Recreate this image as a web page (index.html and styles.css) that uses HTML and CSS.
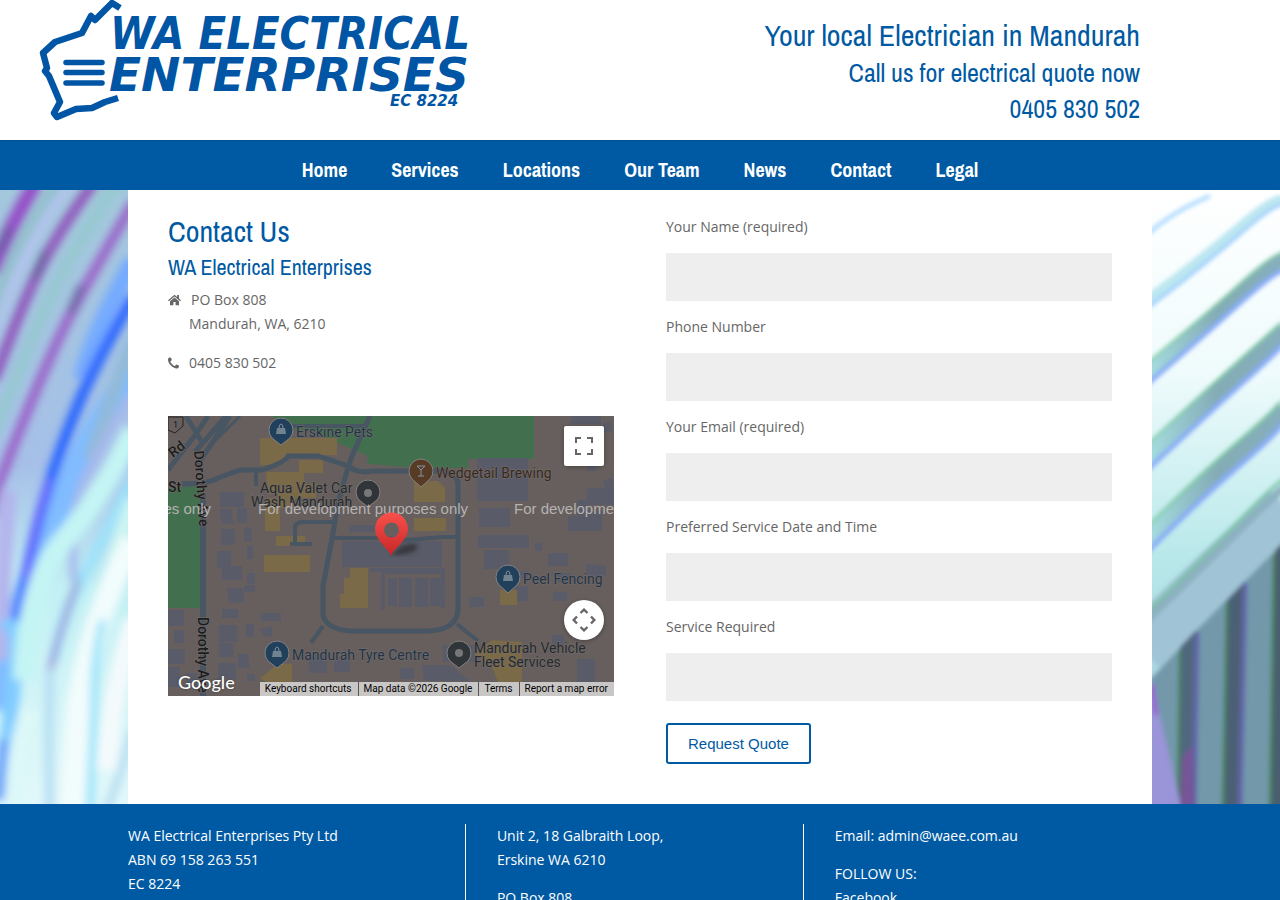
FILE: index.html
```html
<!DOCTYPE html>
<html lang="en">

<head>
    <meta charset="UTF-8">
    <meta name="viewport" content="width=device-width, initial-scale=1.0">
    <title>Contact Us - WA Electrical Enterprises</title>
    <link rel="stylesheet" href="styles.css">
</head>

<body>

    <header class="header">
        <a href="#" class="logo" aria-label="WA Electrical Enterprises">
            <svg width="432" height="120" viewBox="0 0 432 120">
                <!-- outline of Western Australia -->
                <path d="M80 8 L72 3 L55 20 L51 16 L42 33 L15 42 L3 53 L7 68 L5 71 L9 76 L20 102 L14 113 L17 117 L36 109 L52 108 L65 102 L78 98" fill="none" stroke="#0055a5" stroke-width="6.500" stroke-linejoin="round"/>
                <path d="M26 62.500H62M26 72.500H62M26 83H62" fill="none" stroke="#0055a5" stroke-width="5.500" stroke-linecap="round"/>
                <g class="logo-text">
                    <text class="narrow" x="70" y="49" font-size="45">WA ELECTRICAL</text>
                    <text x="69" y="91" font-size="47">ENTERPRISES</text>
                    <text x="350" y="106" font-size="15">EC 8224</text>
                </g>
            </svg>
        </a>
        <div class="slogan">
            <p class="slogan-big">Your local Electrician in Mandurah</p>
            <p>Call us for electrical quote now</p>
            <p>0405 830 502</p>
        </div>
    </header>

    <nav class="nav">
        <a href="#">Home</a>
        <a href="#">Services</a>
        <a href="#">Locations</a>
        <a href="#">Our Team</a>
        <a href="#">News</a>
        <a href="#">Contact</a>
        <a href="#">Legal</a>
    </nav>

    <main class="main">
        <!-- light trails behind the content -->
        <svg class="backdrop" viewBox="0 0 1280 614" preserveAspectRatio="none" aria-hidden="true">
            <defs>
                <linearGradient id="leftBase" x1="0" y1="0" x2="0" y2="1">
                    <stop offset="0" stop-color="#a3c8dc"/>
                    <stop offset=".45" stop-color="#a6c0e8"/>
                    <stop offset=".65" stop-color="#c2f0f4"/>
                    <stop offset="1" stop-color="#e2f8fa"/>
                </linearGradient>
                <linearGradient id="rightBase" x1="0" y1="0" x2="0" y2="1">
                    <stop offset="0" stop-color="#ffffff"/>
                    <stop offset=".3" stop-color="#effbfc"/>
                    <stop offset=".6" stop-color="#b8e8ea"/>
                    <stop offset="1" stop-color="#9cc4d4"/>
                </linearGradient>
                <linearGradient id="band" gradientUnits="userSpaceOnUse" x1="1152" y1="0" x2="1280" y2="0">
                    <stop offset="0" stop-color="#a4dade"/>
                    <stop offset=".5" stop-color="#84acb6"/>
                    <stop offset="1" stop-color="#86aebc"/>
                </linearGradient>
                <filter id="soft" x="-20%" y="-20%" width="140%" height="140%"><feGaussianBlur stdDeviation="4"/></filter>
                <filter id="crisp" x="-20%" y="-20%" width="140%" height="140%"><feGaussianBlur stdDeviation="2"/></filter>
            </defs>
            <rect width="640" height="614" fill="url(#leftBase)"/>
            <rect x="640" width="640" height="614" fill="url(#rightBase)"/>

            <g fill="none" filter="url(#soft)">
                <path d="M70 -10 Q20 60 -10 150" stroke="#b2c4ee" stroke-width="12"/>
                <path d="M60 -10 Q10 60 -10 130" stroke="#8fc0c8" stroke-width="9"/>
                <path d="M118 -10 Q60 80 36 140 T-10 250" stroke="#96c8d0" stroke-width="12"/>
                <path d="M36 -8 Q8 40 -8 82" stroke="#9450c8" stroke-width="15"/>
                <path d="M94 -8 Q60 40 43 72 T-6 190" stroke="#9058bc" stroke-width="11"/>
                <path d="M134 12 Q100 70 77 112 T17 247 T-6 320" stroke="#9a62c8" stroke-width="10"/>
                <g stroke="#506088" stroke-width="8" stroke-linecap="round" opacity=".6">
                    <path d="M8 40 L-2 62M44 64 L36 86M80 98 L72 120"/>
                </g>
                <path d="M134 180 Q90 240 70 290 T12 440 L-4 520" stroke="#80bcff" stroke-width="24"/>
                <path d="M134 70 Q90 150 82 190" stroke="#74aaff" stroke-width="18"/>
                <path d="M134 106 Q96 172 80 210 T50 292 T27 382 T12 444" stroke="#2864ff" stroke-width="11"/>
                <path d="M50 290 Q34 340 26 390" stroke="#6868ff" stroke-width="8"/>
                <path d="M8 300 Q2 400 0 470" stroke="#b4b4ec" stroke-width="16"/>
                <path d="M4 440 Q20 420 14 490 T-4 610" stroke="#80ccff" stroke-width="15"/>
                <path d="M134 150 Q110 210 90 270" stroke="#92bad8" stroke-width="14"/>
                <path d="M130 206 Q98 260 84 290 T74 390" stroke="#a6b8ec" stroke-width="8"/>
                <path d="M134 240 Q100 310 64 350 T24 490" stroke="#c4f5f4" stroke-width="22"/>
                <path d="M134 285 Q106 345 84 385 T54 470" stroke="#9ce2fa" stroke-width="10"/>
                <path d="M78 390 Q60 440 50 480" stroke="#9c9cd8" stroke-width="6"/>
                <path d="M50 480 Q48 560 50 620" stroke="#b6def2" stroke-width="9"/>
                <path d="M134 310 Q108 380 104 430" stroke="#ccf5f2" stroke-width="16"/>
                <path d="M134 350 Q90 430 78 520 L72 620" stroke="#f2fcfc" stroke-width="24"/>
                <path d="M30 520 Q16 560 14 620" stroke="#ddf8f8" stroke-width="20"/>
                <path d="M103 430 Q92 470 94 520 L90 620" stroke="#90e2fa" stroke-width="7"/>
                <path d="M134 430 Q112 500 106 580" stroke="#f4fafc" stroke-width="20"/>
                <path d="M132 540 Q120 590 106 620" stroke="#b4daf0" stroke-width="7"/>
                <path d="M3 550 L0 610" stroke="#6498f8" stroke-width="8"/>
            </g>

            <g fill="none" filter="url(#crisp)">
                <path d="M1148 44 Q1172 22 1210 6" stroke="#a8d8ff" stroke-width="4"/>
                <path d="M1146 112 Q1195 76 1240 38 T1286 14" stroke="#bce6f0" stroke-width="11"/>
                <path d="M1146 119 Q1195 83 1240 44 T1286 17" stroke="#9accff" stroke-width="3"/>
                <g stroke="url(#band)">
                    <path d="M1146 184 Q1200 140 1240 104 T1286 72" stroke-width="17"/>
                    <path d="M1146 268 Q1200 218 1240 182 T1286 140" stroke-width="20"/>
                    <path d="M1146 350 Q1200 296 1240 262 T1286 218" stroke-width="20"/>
                </g>
                <g stroke="#78cc98" stroke-width="3" opacity=".7">
                    <path d="M1146 174 Q1200 130 1240 94 T1286 62"/>
                    <path d="M1146 256 Q1200 206 1240 170 T1286 130"/>
                    <path d="M1146 338 Q1200 285 1240 250 T1286 207"/>
                </g>
                <g stroke="#88acf8" stroke-width="5">
                    <path d="M1146 195 Q1200 149 1240 113 T1286 80"/>
                    <path d="M1146 281 Q1200 231 1240 195 T1286 151"/>
                    <path d="M1146 363 Q1200 309 1240 275 T1286 229"/>
                </g>
                <path d="M1142 460 Q1200 402 1240 366 T1290 318" stroke="#a0c4d6" stroke-width="56"/>
                <path d="M1146 423 Q1200 371 1240 330 T1286 288" stroke="#74c09c" stroke-width="3"/>
                <path d="M1146 431 Q1200 379 1240 339 T1286 297" stroke="#8cb0c0" stroke-width="8"/>
                <path d="M1146 494 L1190 447 L1240 396 L1286 350 V620 H1146Z" fill="#7298aa"/>
                <path d="M1180 457 L1196 440 V620 H1178Z" fill="#50687e"/>
                <path d="M1227 410 L1245 391 L1242 620 H1224Z" fill="#4c6074"/>
                <path d="M1275 360 L1286 350 V620 H1271Z" fill="#485e70"/>
                <path d="M1180 460 L1178 620M1227 412 L1223 620M1274 364 L1270 620" stroke="#48845c" stroke-width="3"/>
                <path d="M1197 442 L1194 620M1245 393 L1240 620" stroke="#6266a8" stroke-width="5"/>
                <path d="M1148 480 L1154 500 L1182 620 H1146Z" fill="#9a94d8"/>
                <path d="M1152 495 L1156 525" stroke="#9868d0" stroke-width="5"/>
                <path d="M1182 568 L1192 555 L1194 620 H1180Z" fill="#765496"/>
            </g>
        </svg>

        <div class="container">
            <section class="contact">
                <h1>Contact Us</h1>
                <h2>WA Electrical Enterprises</h2>
                <div class="address">
                    <svg width="13" height="12" viewBox="0 0 13 12"><path d="M6.500 .8 0 6.300l.8.900 5.700-4.800 5.700 4.800.8-.9-2-1.700V1.100H9.200v1.900zM6.500 3.600 2 7.300V11.200h3.400V7.900h2.200v3.300H11V7.300z" fill="#666"/></svg>
                    <p class="po-box">PO Box 808</p>
                    <p class="town">Mandurah, WA, 6210</p>
                </div>
                <div class="address">
                    <svg width="11" height="12" viewBox="0 0 11 12"><path d="M11 8.900c0 .4-.2 1.200-.4 1.500-.3.600-1.200 1-1.900 1C5 11.400 0 6.400 0 2.700c0-.7.400-1.600 1-1.900C1.300.6 2.100.4 2.500.4c.4 0 1.300 2.100 1.400 2.400 0 .7-1.500 1.300-1.500 1.900C2.400 5.500 5.900 9 6.700 9c.6 0 1.200-1.500 1.900-1.500.3.100 2.400 1 2.400 1.400z" fill="#666"/></svg>
                    <p class="phone">0405 830 502</p>
                </div>

                <div class="map">
                    <svg class="map-tiles" viewBox="0 0 446 280" preserveAspectRatio="xMidYMid slice">
                        <rect width="446" height="280" fill="#665f5e"/>
                        <!-- parks -->
                        <path d="M0 72 L34 70 V192 H0ZM104 0 H366 V43 H300 V52 H250 L202 48 L184 34 Q150 22 120 12Z" fill="#42704f"/>
                        <path d="M100 13 L140 14 L200 40 L198 50 L110 44Z" fill="#665f5e"/>
                        <!-- buildings -->
                        <g fill="#595c68">
                            <path d="M52 76h24v15h-24zM51 93h12l3 15h-12zM69 92h10v15h-10zM53 113h14v16h-14zM76 112l7-1 1 14h-8zM49 135h14v17h-14zM54 150h20v14h-20zM79 130h6v13h-6zM79 157h8v11h-8zM59 172h16l1 14-15 1zM76 169h11v7h-11zM54 193h16v9h-16zM51 209h18v17h-18zM51 227h14v14h-14zM78 208h8v13h-8zM93 197h20v8h-20zM92 213l12-3v10l-8 1zM70 238h11v14h-11zM50 247h18v16h-18zM79 258h8v7h-8z"/>
                            <path d="M0 194h16v16h-16zM6 214h10v13h-10zM0 233h17v15h-17zM0 251h12v20h-12zM18 257h11v15h-11z"/>
                            <path d="M309 42h51v43h-51zM311 92h31v19h-31zM310 119h51v13h-51zM316 134h25v19h-25zM367 127h7v8h-7zM409 84h10v11h15v20h-34v-15h9zM380 137h20v13h-20zM419 72h27v17h-27zM403 0h30v8h-30zM435 7l7-1 2 9-8 1zM419 48h9v7h-9zM435 64l10-2v10h-8z"/>
                            <path d="M174 125h100v26h-100zM202 152h75v40h-4v-34h-56v36h-4v-38h-11zM220 162h9v28h-9zM231 162h13v29h-13zM247 162h13v29h-13zM262 162h11v28h-11zM181 109h28v7h-28z"/>
                            <path d="M347 155h13v7h-13zM390 157h14v9h-14zM418 148l20 2v10h-20zM301 181h15v10h-15zM385 176h14v9h-14zM347 171l13-1v15h-12zM384 219h12v12h-12zM409 243h18v30h-18zM141 239h18v18h-18zM166 244h16v12h-16zM232 252h14v11h-14zM254 249h28l20 16h-46zM275 229h34v17h-34z"/>
                        </g>
                        <!-- shops -->
                        <path d="M92 22h77v17h-46l-10 10h-21zM131 44h24v13h-24zM98 56l38 0v12h12v14h-21v10h-17v-14h-10zM97 82h15v33h-15zM108 120h29v10h-29zM96 139h46v17h-46zM182 152h18v40h-28v-14h4v-16h6zM246 65h24l7 7v14h-31zM246 102h32v13h-32zM332 174h17v15h-17zM92 262l18-14h14v18h-26zM306 238l18-14 30 2v45h-22l-8-20z" fill="#7a6a48"/>
                        <!-- roads -->
                        <g fill="none" stroke="#485562">
                            <path d="M35 78V280" stroke-width="6"/>
                            <path d="M40 0 28 18 0 54M58 0 27 36M62 0 30 48M18 0 34 26" stroke-width="5"/>
                            <path d="M72 0 Q58 14 38 34" stroke-width="3"/>
                            <path d="M14 68 Q40 68 50 62 L72 54 H94 Q118 46 120 40 L150 40 180 50Q190 58 204 55H270 Q290 56 290 68V192Q290 214 260 215H184Q160 214 155 200V170L166 112 Q170 80 184 40L202 0" stroke-width="5"/>
                            <path d="M88 54V70M120 10H198M127 127V112Q127 106 136 106H166M122 128H144M164 122H215L240 124 274 121H290M155 210 143 227M289 208 310 225" stroke-width="4"/>
                        </g>
                        <!-- place pins -->
                        <g stroke="#858180" stroke-width="1">
                            <g fill="#20405c">
                                <path d="M113 29 104 22A12 12 0 1 1 122 22Z"/>
                                <path d="M340 177 331 169A12 12 0 1 1 349 169Z"/>
                                <path d="M109 252 100 245A12 12 0 1 1 118 245Z"/>
                            </g>
                            <g fill="#303539">
                                <path d="M200 91 191 84A12 12 0 1 1 209 84Z"/>
                                <path d="M291 252 282 245A12 12 0 1 1 300 245Z"/>
                            </g>
                            <path d="M253 71 244 63A12 12 0 1 1 262 63Z" fill="#583b25"/>
                        </g>
                        <circle cx="200" cy="77" r="4" fill="#777"/>
                        <circle cx="291" cy="237" r="4" fill="#777"/>
                        <path d="M108 18l1-6h8l1 6zM335 165l1-6h8l1 6zM104 241l1-6h8l1 6z" fill="#718391"/>
                        <path d="M111 12q0-4 2-4t2 4M338 159q0-4 2-4t2 4M107 235q0-4 2-4t2 4M249 50h8l-4 4zM253 54v6M250 60h6" fill="none" stroke="#8293a0" stroke-width="1"/>
                        <path d="M0 1H15V10L7 17 0 14Z" fill="#665f5e" stroke="#222" stroke-width="1"/>

                        <g class="map-labels">
                            <text x="5" y="12" class="road-label small">1</text>
                            <text x="128" y="21" fill="#1f3447">Erskine Pets</text>
                            <text x="268" y="62" fill="#3a291d">Wedgetail Brewing</text>
                            <text x="92" y="77">Aqua Valet Car</text>
                            <text x="83" y="91">Wash Mandurah</text>
                            <text x="355" y="168" fill="#1f3447">Peel Fencing</text>
                            <text x="124" y="244" fill="#1f3447">Mandurah Tyre Centre</text>
                            <text x="306" y="237">Mandurah Vehicle</text>
                            <text x="306" y="251">Fleet Services</text>
                            <text class="road-label" transform="translate(26 35) rotate(86)">Dorothy Ave</text>
                            <text class="road-label" transform="translate(30 201) rotate(90)">Dorothy Ave</text>
                            <text class="road-label" transform="translate(5 42) rotate(-38)">Rd</text>
                            <text x="0" y="76" class="road-label">St</text>
                        </g>
                        <g class="watermark">
                            <text x="43" y="98" text-anchor="end">For development purposes only</text>
                            <text x="90" y="98">For development purposes only</text>
                            <text x="346" y="98">For development purposes only</text>
                        </g>

                        <!-- office marker -->
                        <defs>
                            <linearGradient id="pin" x1="0" y1="0" x2="0" y2="1">
                                <stop offset="0" stop-color="#f9504c"/>
                                <stop offset="1" stop-color="#c52626"/>
                            </linearGradient>
                            <filter id="shade"><feGaussianBlur stdDeviation="2"/></filter>
                        </defs>
                        <path d="M223 139 234 130Q254 124 248 134Q240 140 223 139Z" fill="#222" opacity=".6" filter="url(#shade)"/>
                        <path fill-rule="evenodd" d="M223 140C220 132 207 124 207 113A16.500 16.500 0 0 1 240 113C240 124 226 132 223 140ZM223.500 106.500A7.500 7.500 0 1 0 223.500 121.500A7.500 7.500 0 1 0 223.500 106.500Z" fill="url(#pin)"/>
                    </svg>

                    <button type="button" class="map-btn fullscreen" aria-label="Toggle fullscreen view">
                        <svg width="18" height="18" viewBox="0 0 18 18"><path d="M1 6V1h5M12 1h5v5M17 12v5h-5M6 17H1v-5" fill="none" stroke="#666" stroke-width="2"/></svg>
                    </button>
                    <button type="button" class="map-btn camera" aria-label="Map camera controls">
                        <svg width="24" height="24" viewBox="0 0 24 24"><path d="M8.500 5 12 1.700 15.500 5M8.500 19l3.500 3.300 3.500-3.300M5 8.500 1.700 12 5 15.500M19 8.500l3.300 3.500-3.300 3.500" fill="none" stroke="#666" stroke-width="2.400"/></svg>
                    </button>
                    <span class="google">Google</span>
                    <div class="map-bar">
                        <button type="button">Keyboard shortcuts</button>
                        <span>Map data ©2026 Google</span>
                        <a href="#">Terms</a>
                        <a href="#">Report a map error</a>
                    </div>
                </div>
            </section>

            <form class="quote">
                <label for="name">Your Name (required)</label>
                <input type="text" id="name">
                <label for="phone">Phone Number</label>
                <input type="tel" id="phone">
                <label for="email">Your Email (required)</label>
                <input type="email" id="email">
                <label for="date">Preferred Service Date and Time</label>
                <input type="text" id="date">
                <label for="service">Service Required</label>
                <input type="text" id="service">
                <button type="submit">Request Quote</button>
            </form>
        </div>
    </main>

    <footer class="footer">
        <div class="footer-col">
            <p>WA Electrical Enterprises Pty Ltd<br>ABN 69 158 263 551<br>EC 8224</p>
        </div>
        <div class="footer-col">
            <p>Unit 2, 18 Galbraith Loop,<br>Erskine WA 6210</p>
            <p>PO Box 808</p>
        </div>
        <div class="footer-col">
            <p>Email: <a href="mailto:admin@waee.com.au">admin@waee.com.au</a></p>
            <p>FOLLOW US:<br><a href="#">Facebook</a></p>
        </div>
    </footer>

</body>

</html>
```
FILE: styles.css
```css
* {
    box-sizing: border-box;
}
body {
    margin: 0;
    font-family: "Open Sans", "Noto Sans", sans-serif;
    font-size: 14px;
    line-height: 24px;
    color: #666;
    background-color: #fff;
}
h1, h2, p {
    margin: 0;
}
a {
    color: inherit;
    text-decoration: none;
}

/* header */
.header {
    display: flex;
    justify-content: space-between;
    height: 140px;
    padding: 0 140px 0 40px;
}
.logo svg {
    display: block;
    overflow: visible;
}
.logo-text {
    font-family: "DejaVu Sans", Verdana, sans-serif;
    font-weight: bold;
    font-style: italic;
    fill: #0055a5;
}
.logo-text .narrow {
    font-family: "DejaVu Sans Condensed", "Liberation Sans", sans-serif;
}
.slogan {
    padding-top: 15px;
    font-family: "Archivo Narrow", "Liberation Sans Narrow", "Arial Narrow", sans-serif;
    font-size: 26px;
    line-height: 36px;
    text-align: right;
    color: #005aa3;
}
.slogan-big {
    font-size: 30px;
    line-height: 40px;
}

/* nav */
.nav {
    display: flex;
    justify-content: center;
    gap: 44px;
    height: 50px;
    padding-top: 9px;
    border-top: 1px solid #00508f;
    font-family: "Archivo Narrow", "Liberation Sans Narrow", "Arial Narrow", sans-serif;
    font-size: 20px;
    font-weight: bold;
    line-height: 40px;
    color: #fff;
    background-color: #005aa3;
}

/* content */
.main {
    position: relative;
}
.backdrop {
    position: absolute;
    top: 0;
    left: 0;
    width: 100%;
    height: 100%;
}
.container {
    position: relative;
    display: grid;
    grid-template-columns: 1fr 1fr;
    gap: 52px;
    width: 80%;
    margin: 0 auto;
    padding: 24px 40px 40px;
    background-color: #fff;
}
.contact h1, .contact h2 {
    font-family: "Archivo Narrow", "Liberation Sans Narrow", "Arial Narrow", sans-serif;
    font-weight: normal;
    color: #005aa3;
}
.contact h1 {
    font-size: 30px;
    line-height: 34px;
}
.contact h2 {
    margin-bottom: 2px;
    font-size: 22px;
    line-height: 38px;
}
.address {
    display: grid;
    grid-template-columns: 21px 1fr;
    margin-bottom: 15px;
}
.address svg {
    margin-top: 6px;
}
.address .po-box {
    padding-left: 2px;
}
.address .town {
    grid-column: 2;
}

/* map */
.map {
    position: relative;
    height: 280px;
    margin-top: 41px;
    overflow: hidden;
}
.map-tiles {
    display: block;
    width: 100%;
    height: 100%;
}
.map-labels {
    font-family: Roboto, sans-serif;
    font-size: 14px;
    fill: #24292d;
    stroke: #756e6c;
    stroke-width: 1px;
    paint-order: stroke;
}
.map-labels .road-label {
    font-weight: 500;
    fill: #1c1c1c;
}
.map-labels .small {
    font-size: 9px;
}
.watermark {
    font-family: "Liberation Sans", Arial, sans-serif;
    font-size: 15px;
    fill: #b5b2b1;
}
.map-btn {
    position: absolute;
    right: 10px;
    display: flex;
    align-items: center;
    justify-content: center;
    width: 40px;
    height: 40px;
    padding: 0;
    border: 0;
    background-color: #fff;
    box-shadow: 0 1px 4px rgba(0, 0, 0, .3);
}
.fullscreen {
    top: 10px;
    border-radius: 2px;
}
.camera {
    bottom: 56px;
    border-radius: 50%;
}
.google {
    position: absolute;
    left: 10px;
    bottom: 2px;
    font-family: Lato, sans-serif;
    font-size: 18px;
    font-weight: 500;
    color: #fff;
    text-shadow: 0 0 2px #333;
}
.map-bar {
    position: absolute;
    right: 0;
    bottom: 0;
    display: flex;
    font-family: Roboto, sans-serif;
    font-size: 10px;
    line-height: 14px;
    color: #000;
    background-color: #c9c6c6;
}
.map-bar > * {
    padding: 0 6px 0 5px;
    white-space: nowrap;
}
.map-bar > * + * {
    border-left: 1px solid #555;
}
.map-bar button {
    border: 0;
    font: inherit;
    color: inherit;
    background: none;
}

/* quote form */
.quote {
    padding-top: 1px;
}
.quote label, .quote input {
    display: block;
}
.quote label {
    margin-bottom: 14px;
}
.quote input {
    width: 100%;
    height: 48px;
    margin-bottom: 14px;
    padding: 0 12px;
    border: 0;
    font: inherit;
    color: inherit;
    background-color: #eee;
}
.quote button {
    height: 41px;
    margin-top: 8px;
    padding: 0 20px;
    border: 2px solid #005aa3;
    border-radius: 3px;
    font-family: "Liberation Sans", Arial, sans-serif;
    font-size: 15px;
    color: #005aa3;
    background-color: #fff;
}

/* footer */
.footer {
    display: flex;
    padding: 20px 10%;
    color: #fff;
    background-color: #005aa3;
}
.footer-col {
    width: 33%;
    min-height: 80px;
    border-right: 1px solid #fff;
}
.footer-col:last-child {
    border-right: 0;
}
.footer-col + .footer-col {
    padding-left: 31px;
}
.footer-col p + p {
    margin-top: 14px;
}
```
